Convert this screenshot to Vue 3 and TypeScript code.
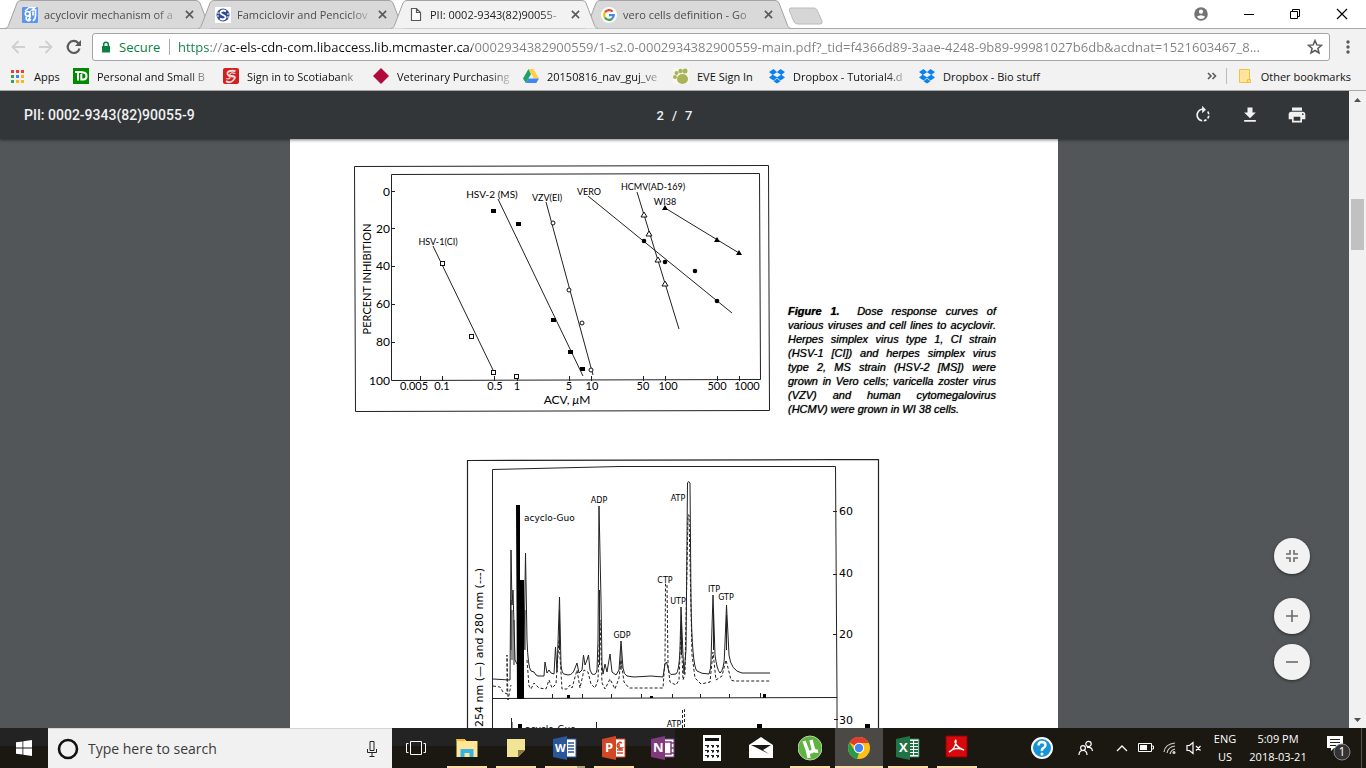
<script setup lang="ts">
interface Tab { id: string; title: string; active?: boolean }
interface Bookmark { icon: string; label: string; size: string }
interface App { id: string; label: string; open?: boolean; current?: boolean }
interface Label { x: number; y: number; t: string; big?: boolean }

const tabs: Tab[] = [
  { id: 'scholar', title: 'acyclovir mechanism of a' },
  { id: 'springer', title: 'Famciclovir and Penciclov' },
  { id: 'file', title: 'PII: 0002-9343(82)90055-', active: true },
  { id: 'google', title: 'vero cells definition - Go' },
]

const url = 'https://ac-els-cdn-com.libaccess.lib.mcmaster.ca/0002934382900559/1-s2.0-0002934382900559-main.pdf?_tid=f4366d89-3aae-4248-9b89-99981027b6db&acdnat=1521603467_8...'

const bookmarks: Bookmark[] = [
  { icon: 'apps', label: 'Apps', size: 'short' },
  { icon: 'td', label: 'Personal and Small B', size: 'long' },
  { icon: 'scotia', label: 'Sign in to Scotiabank', size: 'long' },
  { icon: 'diamond', label: 'Veterinary Purchasing', size: 'long' },
  { icon: 'drive', label: '20150816_nav_guj_ve', size: 'long' },
  { icon: 'paw', label: 'EVE Sign In', size: 'mid' },
  { icon: 'dropbox', label: 'Dropbox - Tutorial4.d', size: 'long' },
  { icon: 'dropbox', label: 'Dropbox - Bio stuff', size: 'plain' },
]

const caption: string[] = [
  'Dose response curves of',
  'various viruses and cell lines to acyclovir.',
  'Herpes simplex virus type 1, CI strain',
  '(HSV-1 [CI]) and herpes simplex virus',
  'type 2, MS strain (HSV-2 [MS]) were',
  'grown in Vero cells; varicella zoster virus',
  '(VZV) and human cytomegalovirus',
  '(HCMV) were grown in WI 38 cells.',
]

const doseY: Label[] = [
  { x: 390, y: 196, t: '0' }, { x: 390, y: 233, t: '20' }, { x: 390, y: 270, t: '40' },
  { x: 390, y: 308, t: '60' }, { x: 390, y: 346, t: '80' }, { x: 390, y: 385, t: '100' },
]
const doseX: Label[] = [
  { x: 414, y: 390, t: '0.005' }, { x: 442, y: 390, t: '0.1' }, { x: 495, y: 390, t: '0.5' },
  { x: 517, y: 390, t: '1' }, { x: 569, y: 390, t: '5' }, { x: 592, y: 390, t: '10' },
  { x: 643, y: 390, t: '50' }, { x: 668, y: 390, t: '100' }, { x: 717, y: 390, t: '500' },
  { x: 747, y: 390, t: '1000' },
]
const doseNames: Label[] = [
  { x: 438, y: 245, t: 'HSV-1(CI)' }, { x: 492, y: 198, t: 'HSV-2 (MS)', big: true },
  { x: 547, y: 201, t: 'VZV(EI)' }, { x: 589, y: 195, t: 'VERO' },
  { x: 653, y: 190, t: 'HCMV(AD-169)' }, { x: 665, y: 205, t: 'WI38' },
]
const doseTicks = [420, 442, 494, 517, 569, 591, 643, 665, 717, 739]
const openSquares = [[443, 264], [472, 337], [494, 373], [517, 377]]
const solidSquares = [[493, 211], [518, 224], [553, 320], [570, 352], [582, 369]]
const openCircles = [[553, 223], [569, 290], [582, 323], [591, 370]]
const solidCircles = [[644, 241], [665, 262], [695, 271], [717, 301]]
const openTriangles = [[644, 215], [649, 234], [658, 260], [665, 284]]
const solidTriangles = [[665, 208], [717, 240], [739, 253]]

const peaks: Label[] = [
  { x: 599, y: 503, t: 'ADP' }, { x: 678, y: 501, t: 'ATP' }, { x: 665, y: 583, t: 'CTP' },
  { x: 678, y: 604, t: 'UTP' }, { x: 714, y: 592, t: 'ITP' }, { x: 726, y: 600, t: 'GTP' },
  { x: 622, y: 638, t: 'GDP' }, { x: 674, y: 727, t: 'ATP' },
]
const scale: Label[] = [
  { x: 839, y: 515, t: '60' }, { x: 839, y: 577, t: '40' }, { x: 839, y: 638, t: '20' }, { x: 839, y: 724, t: '30' },
]

const apps: App[] = [
  { id: 'explorer', label: 'File Explorer', open: true },
  { id: 'sticky', label: 'Sticky Notes', open: true },
  { id: 'word', label: 'Word', open: true },
  { id: 'ppt', label: 'PowerPoint', open: true },
  { id: 'onenote', label: 'OneNote' },
  { id: 'calc', label: 'Calculator' },
  { id: 'mail', label: 'Mail' },
  { id: 'torrent', label: 'Torrent', open: true },
  { id: 'chrome', label: 'Chrome', open: true, current: true },
  { id: 'excel', label: 'Excel', open: true },
  { id: 'acrobat', label: 'Acrobat Reader', open: true },
]
</script>

<template>
  <div class="desktop">
    <header class="browser">
      <div class="tabstrip">
        <div v-for="tab in tabs" :key="tab.id" class="tab" :class="{ active: tab.active }">
          <svg class="tab-shape" viewBox="0 0 207 29" preserveAspectRatio="none">
            <path d="M0 28.5C3 28 3 26 4 24L12 3Q13 .5 16 .5H191Q194 .5 195 3L203 24C204 26 204 28 207 28.5" />
          </svg>
          <svg v-if="tab.id === 'scholar'" class="fav" viewBox="0 0 16 16">
            <rect width="16" height="16" rx="1" fill="#5b93f5" />
            <path d="M5.500 4.500a2.300 2.300 0 1 0 .1 4.600a2.300 2.300 0 0 0-.1-4.600M8 4v6q0 2-2 2.500M4.500 10c-2 3.500 4 5 4 2M11 4.500v4M13.500 3.500v5.500q0 3-2.500 5" fill="none" stroke="#fff" stroke-width="1.700" />
            <path d="M3 4L7 .5h6L10 3h4.500" fill="none" stroke="#fff" stroke-width="1.400" />
          </svg>
          <svg v-else-if="tab.id === 'springer'" class="fav" viewBox="0 0 16 16">
            <rect width="16" height="16" fill="#fff" />
            <circle cx="8" cy="8" r="6.500" fill="#2f4a9a" />
            <path d="M11 4.500Q8 2.500 6 4.500T8 8T10 11.500T5 11.500" fill="none" stroke="#fff" stroke-width="1.800" />
            <path d="M2 6h2M2 9h2M12 7h2M12 10h2" stroke="#fff" />
          </svg>
          <svg v-else-if="tab.id === 'file'" class="fav" viewBox="0 0 16 16">
            <path d="M3.500 1.500h5l4 4v8h-9zM8.500 1.500v4h4" fill="#fff" stroke="#5a5a5a" stroke-width="1.200" />
          </svg>
          <svg v-else class="fav" viewBox="0 0 16 16">
            <circle cx="8" cy="8" r="8" fill="#fff" />
            <g fill="none" stroke-width="2.200">
              <path d="M11.600 4.600A4.800 4.800 0 0 0 3.900 5.500" stroke="#ea4335" />
              <path d="M3.900 5.500A4.800 4.800 0 0 0 3.900 10.500" stroke="#fbbc05" />
              <path d="M3.900 10.500A4.800 4.800 0 0 0 11.200 11.600" stroke="#34a853" />
              <path d="M11.200 11.600A4.800 4.800 0 0 0 12.800 8.100H8" stroke="#4285f4" />
            </g>
          </svg>
          <span class="tab-title">{{ tab.title }}</span>
          <button class="tab-close" :aria-label="'Close ' + tab.title">
            <svg viewBox="0 0 10 10"><path d="M1 1l8 8M9 1l-8 8" stroke="#5a5a5a" stroke-width="1.800" /></svg>
          </button>
        </div>
        <button class="new-tab" aria-label="New tab">
          <svg viewBox="0 0 36 18"><path d="M3 1h23q2 0 3 2l5 11q1 3-2 3H10q-3 0-4-2L1.500 4Q.5 1 3 1z" fill="#d6d6d6" stroke="#bcbcbc" /></svg>
        </button>
        <div class="window-controls">
          <button class="profile" aria-label="Profile"><svg width="14" height="14" viewBox="0 0 14 14"><circle cx="7" cy="7" r="6.800" fill="#737373" /><circle cx="7" cy="4.700" r="2.100" fill="#fff" /><path d="M2.800 9.800q4.200-3 8.400 0q-1.500 2.200-4.200 2.200t-4.200-2.200" fill="#fff" /></svg></button>
          <button aria-label="Minimize"><svg width="12" height="12" viewBox="0 0 12 12"><path d="M1 6.500h10" stroke="#000" /></svg></button>
          <button aria-label="Restore"><svg width="12" height="12" viewBox="0 0 12 12"><path d="M1.500 3.500h7v7h-7zM3.500 3.500v-2h7v7h-2" fill="none" stroke="#000" /></svg></button>
          <button aria-label="Close"><svg width="12" height="12" viewBox="0 0 12 12"><path d="M1 1l10 10M11 1L1 11" stroke="#000" stroke-width="1.200" /></svg></button>
        </div>
      </div>

      <div class="toolbar">
        <button class="nav" aria-label="Back"><svg viewBox="0 0 16 16"><path d="M15 8H2.500M8.500 2l-6 6l6 6" stroke="#d0d0d0" stroke-width="1.800" fill="none" /></svg></button>
        <button class="nav" aria-label="Forward"><svg viewBox="0 0 16 16"><path d="M1 8h12.500M7.500 2l6 6l-6 6" stroke="#d0d0d0" stroke-width="1.800" fill="none" /></svg></button>
        <button class="nav" aria-label="Reload"><svg viewBox="0 0 16 16"><path d="M13.500 9.500A6 6 0 1 1 12.200 4L14 6" stroke="#5a5a5a" stroke-width="2.200" fill="none" /><path d="M15 1v6H9z" fill="#5a5a5a" /></svg></button>
        <div class="omnibox">
          <svg class="lock" viewBox="0 0 10 12"><path d="M1 5h8v6.500H1z" fill="#0b8043" /><path d="M2.700 5V3.500a2.300 2.300 0 0 1 4.600 0V5" fill="none" stroke="#0b8043" stroke-width="1.500" /></svg>
          <label class="secure" for="address">Secure</label>
          <input id="address" class="address" type="text" :value="url" />
          <button class="star" aria-label="Bookmark this page"><svg viewBox="0 0 16 16"><path d="M8 1.500l1.800 4.400l4.700.4l-3.600 3.100l1.100 4.600L8 11.500L4 14l1.100-4.600L1.500 6.300l4.700-.4z" fill="none" stroke="#5a5a5a" stroke-width="1.500" /></svg></button>
        </div>
        <button class="menu" aria-label="Menu"><svg viewBox="0 0 4 14"><circle cx="2" cy="2" r="1.700" /><circle cx="2" cy="7" r="1.700" /><circle cx="2" cy="12" r="1.700" /></svg></button>
      </div>

      <nav class="bookmarks">
        <a v-for="b in bookmarks" :key="b.label" href="#" class="bookmark" :class="b.size">
          <svg viewBox="0 0 16 16">
            <template v-if="b.icon === 'apps'">
              <path d="M1 2h3v3H1zM6 2h3v3H6zM11 2h3v3h-3z" fill="#f13d34" />
              <path d="M1 7h3v3H1z" fill="#32a350" /><path d="M6 7h3v3H6z" fill="#2e8af5" /><path d="M11 7h3v3h-3zM6 12h3v3H6zM11 12h3v3h-3z" fill="#fbb51b" /><path d="M1 12h3v3H1z" fill="#32a350" />
            </template>
            <template v-else-if="b.icon === 'td'">
              <rect width="16" height="16" fill="#008a00" /><path d="M2 4h7.500M5 4v8.500M8.300 6v5.500h2q3.200 0 3.200-3.500t-3.200-3.500H8" fill="none" stroke="#fff" stroke-width="2" />
            </template>
            <template v-else-if="b.icon === 'scotia'">
              <rect width="16" height="16" rx="2" fill="#d41f1f" /><path d="M12.500 3Q5 2 4.500 5T9 8T10.500 12T3 13" fill="none" stroke="#f6dcdc" stroke-width="1.800" /><path d="M12.500 5.500Q7 4 7 6.500T11 9M3 10.500q4 1 4-1T5 8" fill="none" stroke="#f6dcdc" stroke-width="1.200" />
            </template>
            <path v-else-if="b.icon === 'diamond'" d="M8 0l8 8l-8 8l-8-8z" fill="#b10b3c" />
            <template v-else-if="b.icon === 'drive'">
              <path d="M5.500 1L0 10.500L2.800 15L8 6z" fill="#1da362" /><path d="M5.500 1h5L16 10.500h-5.200z" fill="#ffcf48" /><path d="M5.300 10.500H16L13.300 15H2.800z" fill="#4285f4" />
            </template>
            <template v-else-if="b.icon === 'paw'">
              <rect width="16" height="16" fill="#f8f8ef" /><ellipse cx="9.500" cy="11" rx="5.500" ry="5" fill="#a8b35a" /><circle cx="2" cy="9" r="2" fill="#a8b35a" /><circle cx="3.500" cy="5" r="2" fill="#a8b35a" /><circle cx="7.500" cy="3" r="2.200" fill="#a8b35a" /><circle cx="12" cy="3" r="2.500" fill="#a8b35a" />
            </template>
            <path v-else d="M4.500 1L0 4l3.500 2.800L0 9.500l4.500 3L8 9.700l3.500 2.800L16 9.500l-3.500-2.700L16 4l-4.500-3L8 3.900zM8 4.200l4 2.600L8 9.300L4 6.800zM8 10.500l-3.500 2.800L8 15.500l3.500-2.200z" fill="#0a83ee" fill-rule="evenodd" />
          </svg>
          <span>{{ b.label }}</span>
        </a>
        <button class="overflow" aria-label="More bookmarks"><svg viewBox="0 0 10 8"><path d="M1 1l3 3l-3 3M5.500 1l3 3l-3 3" fill="none" stroke="#5a5a5a" stroke-width="1.600" /></svg></button>
        <a href="#" class="bookmark other">
          <svg viewBox="0 0 16 16"><path d="M2.500 1.500h10v10h1v3h-11z" fill="#ffe599" stroke="#eec24b" /><path d="M10.500 14.500v-3h3v3z" fill="#ffe07d" stroke="#eec24b" /></svg>
          <span>Other bookmarks</span>
        </a>
      </nav>
    </header>

    <main class="viewer">
      <div class="document">
        <div class="pdf-bar">
          <h1>PII: 0002-9343(82)90055-9</h1>
          <p class="pages"><span>2</span><span>/</span><span>7</span></p>
          <div class="pdf-actions">
            <button aria-label="Rotate clockwise"><svg viewBox="0 0 24 24" fill="#f1f1f1"><path d="M15.550 5.550L11 1v3.070C7.060 4.560 4 7.920 4 12s3.050 7.440 7 7.930v-2.020c-2.840-.48-5-2.940-5-5.910s2.160-5.430 5-5.910V10zM19.930 11a7.900 7.900 0 0 0-1.620-3.890l-1.420 1.420c.54.75.88 1.600 1.020 2.470zM13 17.900v2.020a7.920 7.920 0 0 0 3.900-1.610l-1.440-1.440c-.75.54-1.590.89-2.460 1.030zm3.890-2.420l1.420 1.410A7.900 7.900 0 0 0 19.930 13h-2.020a5.900 5.900 0 0 1-1.020 2.480z" /></svg></button>
            <button aria-label="Download"><svg viewBox="0 0 24 24" fill="#f1f1f1"><path d="M19 9h-4V3H9v6H5l7 7zM5 18v2h14v-2z" /></svg></button>
            <button aria-label="Print"><svg viewBox="0 0 24 24" fill="#f1f1f1"><path d="M19 8H5c-1.660 0-3 1.340-3 3v6h4v4h12v-4h4v-6c0-1.660-1.340-3-3-3zm-3 11H8v-5h8zm3-7a1 1 0 1 1 0-2a1 1 0 0 1 0 2zm-1-9H6v4h12z" /></svg></button>
          </div>
        </div>

        <article class="paper">
          <figure class="dose">
            <svg width="416" height="247" viewBox="354 165 416 247" class="plot">
              <g fill="none" stroke="#222">
                <path d="M354.500 166.500L768.500 165.500L769.500 410.500L355.500 411.500z" />
                <path d="M391.500 174.500L759.500 173.500L760.500 379.500L391.500 380.500z" />
                <path v-for="x in doseTicks" :key="x" :d="`M${x}.5 376v5`" />
                <path d="M391 191.500h4M391 228.500h4M391 266.500h4M391 304.500h4M391 342.500h4" />
                <path d="M433 246L494 372M498 199L583 376M546 202L593 375M588 196L732 313M637 192L679 329M665 208L739 253" />
              </g>
              <rect v-for="p in openSquares" :key="p[0]" :x="p[0] - 2.500" :y="p[1] - 2.500" width="4" height="4" fill="#fff" stroke="#111" />
              <rect v-for="p in solidSquares" :key="p[0]" :x="p[0] - 2" :y="p[1] - 2" width="5" height="4" />
              <circle v-for="p in openCircles" :key="p[0]" :cx="p[0]" :cy="p[1]" r="2" fill="#fff" stroke="#111" />
              <circle v-for="p in solidCircles" :key="p[0]" :cx="p[0]" :cy="p[1]" r="2.300" />
              <path v-for="p in openTriangles" :key="p[0]" :d="`M${p[0]} ${p[1] - 3}l3 5h-6z`" fill="#fff" stroke="#111" />
              <path v-for="p in solidTriangles" :key="p[0]" :d="`M${p[0]} ${p[1] - 3}l3 5h-6z`" />
              <text v-for="l in doseY" :key="l.t" :x="l.x" :y="l.y" text-anchor="end" class="num">{{ l.t }}</text>
              <text v-for="l in doseX" :key="l.t" :x="l.x" :y="l.y" text-anchor="middle" class="num small">{{ l.t }}</text>
              <text v-for="l in doseNames" :key="l.t" :x="l.x" :y="l.y" text-anchor="middle" class="name" :class="{ big: l.big }">{{ l.t }}</text>
              <text x="567" y="404" text-anchor="middle" class="num">ACV, <tspan font-style="italic">μ</tspan>M</text>
              <text transform="translate(371 279) rotate(-90)" text-anchor="middle" class="num small">PERCENT INHIBITION</text>
            </svg>
            <figcaption>
              <span v-for="(line, i) in caption" :key="i" class="line" :class="{ last: i === caption.length - 1 }"><template v-if="i === 0"><b>Figure 1.</b>&nbsp; </template>{{ line }}</span>
            </figcaption>
          </figure>

          <figure class="trace">
            <svg width="414" height="300" viewBox="466 459 414 300" class="plot">
              <g fill="none" stroke="#222">
                <path d="M467.500 759V460.500L878.500 459.500V759" stroke-width="1.200" />
                <path d="M492.500 759V469.500L620 466.500H835.500L837 698V759M492 698.500L837 697.500" />
                <path d="M833 511.500h4M833 574.500h4M833 634.500h4M834 719.500h4" />
                <path d="M552.500 694v4M582.500 694v4M611.500 694v4M641.500 694v4M672.500 694v4M700.500 694v4M729.500 694v4M760.500 693v5M511.500 718v12M596.500 722v8" />
                <path d="M493 679L510 680L511 550L512 605L513 590L515 660L517 664M524 650L525.500 553L527 640Q528 668 531 671L534 672Q536 676 538 676H544L545 662L547 673L549 670L551 673L554 674L555.500 647L557 672L559.500 597L561 665Q562 674 564 674L568 675Q573 675 575 668L577 663L579 673L582 670L583.500 655L585 665L587 660L588.500 655L590 670L592 674Q596 676 597 670L598 640L599 506L601 600L602 665L603 674L605 664L607 672L610 654L612 672L616 675L619 670L621 641L623 668Q624 675 627 676L634 677L651 676L663 677L665 664L666.500 662L668 668Q669 674 671 674.500L676 674Q679 672 680 650L681 607L683 655L684 674L686 650L687.500 483Q688.500 480 690 483L691 600Q692 667 697 671Q701 674 709 674Q711 670 711 660L713 595L715 655Q717 670 720 673Q724 670 724.500 655L726.500 605L729 655Q731 671 742 673H770" />
                <path d="M511 600v50M512 610v50M514 620v45M599.500 590v75M621 650v20M681.500 615v40M559.500 610v40M713.500 610v40M726.500 615v35M525 610v40M512 722v8" />
                <path d="M493 686L500 687L503 692L507 694V655L508 700L511 685M527 660L529 686L531 689L534 683L539 688L546 689L549 680L552 688L556 684L559 640L562 689H567L570 685L572 688L577 670L580 688L584 670L588 672L591 684L595 688L598 680L600 620L602 683L605 689L610 679L615 689L619 678L621 660L624 682L629 688L663 688L665 660L665.500 584L667 584L668 665L670 682L676 685L679 680L681 630L683 680L685 674L688 515L689 515L692 655L695 678L701 684L710 682L713 652L716 680L722 676L726 660L731 680L734 681H771M682.500 728V709.500h2V728" stroke-dasharray="3 2" />
              </g>
              <path d="M516 505h4v75h4v119h-7zM518 724h4v5h-4zM757 724h5v5h-5zM865 724h5v5h-5zM567 695h3v3h-3zM650 696h3v2h-3zM763 694h3v4h-3z" />
              <text v-for="(l, i) in peaks" :key="i" :x="l.x" :y="l.y" text-anchor="middle" class="peak">{{ l.t }}</text>
              <text v-for="l in scale" :key="l.t" :x="l.x" :y="l.y" class="scale">{{ l.t }}</text>
              <text x="524" y="521" class="guo">acyclo-Guo</text>
              <text x="525" y="732" class="guo">acyclo-Guo</text>
              <text transform="translate(483 727) rotate(-90)" class="axis">254 nm (—) and 280 nm (---)</text>
            </svg>
          </figure>
        </article>

        <div class="zoom">
          <button class="fit" aria-label="Fit to page"><svg viewBox="0 0 12 12"><path d="M0 4h4V0M12 4H8V0M0 8h4v4M12 8H8v4" fill="none" stroke="#6b6b6b" stroke-width="1.600" /></svg></button>
          <button aria-label="Zoom in"><svg viewBox="0 0 12 12"><path d="M0 6h12M6 0v12" stroke="#6b6b6b" stroke-width="1.600" /></svg></button>
          <button aria-label="Zoom out"><svg viewBox="0 0 12 12"><path d="M0 6h12" stroke="#6b6b6b" stroke-width="1.600" /></svg></button>
        </div>
      </div>

      <div class="scrollbar">
        <button aria-label="Scroll up"><svg viewBox="0 0 7 4"><path d="M0 4L3.500 0L7 4z" fill="#505050" /></svg></button>
        <div class="track"><div class="thumb"></div></div>
        <button aria-label="Scroll down"><svg viewBox="0 0 7 4"><path d="M0 0h7L3.500 4z" fill="#505050" /></svg></button>
      </div>
    </main>

    <footer class="taskbar">
      <button class="start" aria-label="Start"><svg viewBox="0 0 16 16"><path d="M0 2.300L6.500 1.400V7.600H0zM7.300 1.300L16 0V7.600H7.300zM0 8.400H6.500V14.600L0 13.700zM7.300 8.400H16V16L7.300 14.700z" fill="#fff" /></svg></button>
      <div class="search">
        <svg class="cortana" viewBox="0 0 22 22"><circle cx="11" cy="11" r="9" fill="none" stroke="#111" stroke-width="2.600" /></svg>
        <input type="text" aria-label="Search" placeholder="Type here to search" />
        <button aria-label="Speak"><svg width="12" height="18" viewBox="0 0 12 18"><path d="M4 1.500h4v9H4zM1.500 9v3.500h9V9M6 12.500v4M3.500 16.500h5" fill="none" stroke="#222" /></svg></button>
      </div>
      <button class="app task-view" aria-label="Task view"><svg width="20" height="16" viewBox="0 0 20 16"><path d="M4.500 1.500h11v13h-11zM2.500 3.500h-2v9h2M17.500 3.500h2v9h-2" fill="none" stroke="#fff" /></svg></button>
      <button v-for="a in apps" :key="a.id" class="app" :class="[a.id, { open: a.open, current: a.current }]" :aria-label="a.label">
        <svg width="24" height="26" viewBox="0 0 24 26">
          <template v-if="a.id === 'explorer'">
            <path d="M1.500 4h8l2 2h11v16h-21z" fill="#ffe596" /><path d="M1.500 4h8l1 2h-9z" fill="#f6bd2b" /><path d="M5.500 22v-8h13v8h-4v-4h-5v4z" fill="#35b2e6" />
          </template>
          <template v-else-if="a.id === 'sticky'"><path d="M3 4h18v11l-7 7H3z" fill="#f1e497" /><path d="M14 22v-7h7z" fill="#877c3e" /></template>
          <template v-else-if="a.id === 'word'">
            <path d="M12 4h11v18H12z" fill="#fff" stroke="#2b579a" /><path d="M15 8h6M15 11h6M15 14h6M15 17h6" stroke="#2b579a" stroke-width="1.500" /><path d="M0 4l14-3v24L0 22z" fill="#2b579a" /><text x="2" y="17" class="office narrow">W</text>
          </template>
          <template v-else-if="a.id === 'ppt'">
            <path d="M12 4h11v18H12z" fill="#fff" stroke="#d24726" /><path d="M20 8a3 3 0 1 0 0 5h-3V9M15 15h6M15 18h6" fill="none" stroke="#d24726" stroke-width="1.500" /><path d="M0 4l14-3v24L0 22z" fill="#d24726" /><text x="3" y="17" class="office">P</text>
          </template>
          <template v-else-if="a.id === 'onenote'">
            <path d="M12 4h11v18H12z" fill="#fff" stroke="#80397b" /><path d="M14 7h6v12h-6M20 8h3M20 13h3M20 18h3" fill="none" stroke="#80397b" stroke-width="1.500" /><path d="M0 4l14-3v24L0 22z" fill="#80397b" /><text x="2" y="17" class="office">N</text>
          </template>
          <template v-else-if="a.id === 'calc'">
            <path d="M3 0h18v26H3z" fill="#fff" /><path d="M5 3h14v3H5z" fill="#111" /><path d="M5 10h4v2l-2 1v-2H5zM11 10h3v2l-2 1v-2h-1zM16 10h3v2l-2 1v-2h-1zM5 15h4v2l-2 1v-2H5zM11 15h3v2l-2 1v-2h-1zM16 15h3v2l-2 1v-2h-1zM5 20h4v2l-2 1v-2H5zM11 20h3v2l-2 1v-2h-1zM16 20h3v2l-2 1v-2h-1z" fill="#222" />
          </template>
          <template v-else-if="a.id === 'mail'"><path d="M0 10L12 2l12 8v13H0z" fill="#fff" /><path d="M2 10h20l-8 5l6 4z" fill="#1c1914" /></template>
          <template v-else-if="a.id === 'torrent'">
            <circle cx="12" cy="13" r="12" fill="#60b340" stroke="#b2d8a0" /><path d="M6 6l3 8q1 4 4 3t2-4l-2-8M15 13q1 4 5 3M9 14l2 9" fill="none" stroke="#fff" stroke-width="3.400" />
          </template>
          <template v-else-if="a.id === 'chrome'">
            <circle cx="12" cy="13" r="11" fill="#fbc116" /><path d="M12 13L2.500 7.500A11 11 0 0 1 21.800 8H12z" fill="#e33b2e" /><path d="M12 13l-2 10.800A11 11 0 0 1 2.500 7.500L7.500 15.500z" fill="#279b4b" /><path d="M7.500 15.500l4.500 2.500l-2 5.800A11 11 0 0 1 5 21.500z" fill="#279b4b" /><circle cx="12" cy="13" r="5.200" fill="#fff" /><circle cx="12" cy="13" r="4.200" fill="#4285f4" />
          </template>
          <template v-else-if="a.id === 'excel'">
            <path d="M12 4h11v18H12z" fill="#fff" stroke="#217346" /><path d="M14 7h3M18 7h4M14 10h3M18 10h4M14 13h3M18 13h4M14 16h3M18 16h4M14 19h3M18 19h4" stroke="#217346" stroke-width="1.800" /><path d="M0 4l14-3v24L0 22z" fill="#217346" /><text x="3" y="17" class="office">X</text>
          </template>
          <template v-else>
            <path d="M1 1h21v21H1z" fill="#d8090d" stroke="#8e0000" /><path d="M4 17q6-3 7-10q0-4-1 0q2 6 9 8q-7-3-12 0q-3 2-3 2" fill="none" stroke="#fff" stroke-width="1.400" />
          </template>
        </svg>
      </button>
      <div class="tray">
        <button class="help" aria-label="Help"><svg width="24" height="24" viewBox="0 0 24 24"><circle cx="12" cy="12" r="10" fill="#1793d8" stroke="#fff" stroke-width="2" /><path d="M8.500 9.500Q8.500 6 12 6t3.500 3q0 2-2 3t-1.500 3" fill="none" stroke="#fff" stroke-width="2.400" /><circle cx="12" cy="18" r="1.500" fill="#fff" /></svg></button>
        <button class="people" aria-label="People"><svg width="16" height="16" viewBox="0 0 16 16" fill="none" stroke="#fff" stroke-width="1.200"><circle cx="10.500" cy="4" r="2.700" /><path d="M9 7.500q5-1 5.500 3.500" /><circle cx="5" cy="8" r="2.400" /><path d="M1 15q0-4.500 4-4.500T9 15" /></svg></button>
        <button class="chev" aria-label="Show hidden icons"><svg width="12" height="8" viewBox="0 0 12 8"><path d="M1 7l5-5l5 5" fill="none" stroke="#fff" stroke-width="1.300" /></svg></button>
        <button aria-label="Battery"><svg width="16" height="10" viewBox="0 0 16 10"><path d="M.5 .5h13v8H.5zM14 3h1.500v3H14" fill="none" stroke="#fff" /><path d="M2 2h7v5H2z" fill="#fff" /></svg></button>
        <button aria-label="Network"><svg width="14" height="14" viewBox="0 0 14 14" fill="none" stroke="#ccc" stroke-width="1.200"><path d="M1 11Q2 3 12 2M4 12Q5 6 12 5M7 13Q8 9 12 8" /><circle cx="11" cy="11.500" r="1" fill="#fff" /></svg></button>
        <button class="mute" aria-label="Volume"><svg width="16" height="14" viewBox="0 0 16 14" fill="none" stroke="#fff" stroke-width="1.200"><path d="M1 4.500h2.500L7 1.500v11L3.500 9.500H1zM10 5l4.500 4.500M14.500 5L10 9.500" /></svg></button>
        <p class="lang">ENG<br />US</p>
        <p class="clock">5:09 PM<br />2018-03-21</p>
        <button class="notes" aria-label="1 notification">
          <svg width="26" height="26" viewBox="0 0 26 26"><path d="M1 1h16v12H8l-3 3v-3H1z" fill="#fff" /><path d="M4 4.500h10M4 7.500h10M4 10.500h6" stroke="#222" /><circle cx="16" cy="17" r="8" fill="#333" stroke="#888" /><text x="16" y="21" text-anchor="middle" class="count">1</text></svg>
        </button>
      </div>
    </footer>
  </div>
</template>

<style>
body { margin: 0; overflow: hidden; }
</style>

<style scoped>
.desktop { height: 100vh; display: flex; flex-direction: column; font-family: "Open Sans", "Noto Sans", sans-serif; font-size: 11px; color: #111; }
* { box-sizing: border-box; }
button { border: 0; padding: 0; background: none; display: flex; align-items: center; justify-content: center; flex: none; font: inherit; }
p, h1, figure { margin: 0; }
svg { display: block; flex: none; }
.browser { background: #f2f2f2; border-bottom: 1px solid #a9a9a9; height: 91px; flex: none; }
.tabstrip { height: 29px; background: #fff; display: flex; padding-left: 5px; box-shadow: inset 0 -1px #a8a8a8; }
.tab { position: relative; width: 207px; height: 29px; margin-right: -14px; display: flex; align-items: center; padding-left: 17px; color: #4c4c4c; }
.tab.active { z-index: 1; color: #222; }
.tab-shape { position: absolute; inset: 0; width: 100%; height: 100%; }
.tab-shape path { fill: #d9d9d9; stroke: #a3a3a3; }
.active .tab-shape path { fill: #f2f2f2; }
.fav { position: relative; width: 16px; height: 16px; }
.tab-title { position: relative; margin-left: 6px; width: 138px; white-space: nowrap; line-height: 20px; font-size: 11px; mask-image: linear-gradient(90deg, #000 112px, transparent 138px); }
.tab-close { position: relative; margin-left: 2px; width: 10px; height: 10px; }
.tab-close svg { width: 9px; height: 9px; }
.new-tab { width: 36px; margin: 7px 0 4px 11px; height: 18px; }
.new-tab svg { width: 36px; }
.window-controls { margin-left: auto; display: flex; height: 27px; }
.window-controls button { width: 46px; }
.window-controls .profile { margin-right: 2px; }
.window-controls button:last-child { width: 48px; }
.toolbar { height: 36px; display: flex; align-items: center; padding: 0 12px 0 4px; }
.nav { width: 28px; height: 28px; }
.nav svg { width: 16px; height: 16px; }
.omnibox { flex: 1; min-width: 0; height: 28px; margin-left: 4px; background: #fff; border: 1px solid #a5a5a5; border-radius: 3px; display: flex; align-items: center; padding: 0 6px 0 8px; font-size: 13px; }
.lock { width: 10px; height: 12px; }
.secure { color: #0b8043; margin-left: 8px; width: 51px; border-right: 1px solid #aaa; line-height: 16px; flex: none; }
.address { flex: 1; min-width: 0; border: 0; outline: 0; padding: 0 0 0 8px; font: inherit; line-height: 24px; color: transparent; background: linear-gradient(90deg, #0b8043 39px, #808080 39px, #808080 55px, #111 55px, #111 302px, #808080 302px); background-clip: text; }
.star { width: 16px; height: 16px; }
.star svg { width: 16px; }
.menu { width: 12px; }
.omnibox + .menu { margin-left: 12px; }
.menu svg { width: 4px; height: 14px; fill: #5a5a5a; }
.bookmarks { height: 22px; display: flex; align-items: center; padding: 0 15px 0 10px; }
.bookmark { display: flex; gap: 8px; align-items: center; color: #111; text-decoration: none; white-space: nowrap; flex: none; margin-right: 13px; }
.bookmark svg { width: 16px; height: 16px; }
.short { width: 50px; }
.mid { width: 83px; }
.long { width: 137px; }
.long span { width: 113px; mask-image: linear-gradient(90deg, #000 92px, transparent 118px); }
.overflow { margin-left: auto; width: 10px; }
.overflow svg { width: 10px; height: 8px; }
.other { margin: 0 0 0 9px; border-left: 1px solid #bbb; padding-left: 10px; }
.viewer { flex: 1; min-height: 0; display: flex; }
.document { flex: 1; min-width: 0; position: relative; background: #525659; overflow: hidden; display: flex; flex-direction: column; }
.pdf-bar { height: 48px; flex: none; background: #323639; box-shadow: 0 1px 3px rgba(0, 0, 0, .5); z-index: 1; display: grid; grid-template-columns: 1fr auto 1fr; align-items: center; color: #f1f1f1; font: 500 14px Roboto, sans-serif; padding: 0 24px; }
h1 { font: inherit; }
.pages { display: flex; gap: 8px; font-size: 13px; }
.pdf-actions { justify-self: end; display: flex; gap: 23px; margin-right: 16px; }
.pdf-actions button { width: 24px; height: 24px; }
.pdf-actions svg { width: 20px; height: 20px; }
.paper { width: 768px; max-width: 100%; align-self: center; margin-right: 1px; flex: 1 0 auto; background: #fff; padding: 26px 62px 0 64px; }
.dose { display: flex; align-items: flex-start; }
.plot { font-family: Lato, sans-serif; }
.num { font-size: 12px; }
.num.small { font-size: 11px; }
.name { font-size: 9px; }
.name.big { font-size: 10px; }
.peak { font: 8px "DejaVu Sans", sans-serif; }
.guo { font: 9px "DejaVu Sans", sans-serif; }
.scale, .axis { font: 11px "DejaVu Sans", sans-serif; }
figcaption { width: 208px; margin: 139px 0 0 18px; font: italic 11px/14px "Liberation Sans", Arial, sans-serif; text-shadow: 0 0 1px #444; color: #000; }
.line { display: block; text-align: justify; text-align-last: justify; white-space: nowrap; }
.line.last { text-align-last: left; }
.trace { margin: 43px 0 0 112px; }
.trace svg { margin-bottom: -60px; }
.zoom { position: absolute; right: 39px; bottom: 48px; display: flex; flex-direction: column; gap: 10px; }
.zoom button { width: 36px; height: 36px; border-radius: 50%; background: #f2f2f2; box-shadow: 0 1px 3px rgba(0, 0, 0, .5); }
.zoom .fit { margin-bottom: 14px; }
.zoom svg { width: 12px; height: 12px; }
.scrollbar { width: 17px; background: #f1f1f1; display: flex; flex-direction: column; }
.scrollbar button { height: 17px; }
.scrollbar svg { width: 7px; height: 4px; }
.track { flex: 1; padding: 91px 2px 0 2px; }
.thumb { height: 51px; background: #c1c1c1; }
.taskbar { height: 40px; flex: none; display: flex; background: linear-gradient(#232323, #232323) 0 0 / 675px 18px no-repeat, #1b1812; color: #fff; }
.start { width: 48px; }
.start svg { width: 16px; height: 16px; }
.search { width: 344px; background: #f1f1f1; display: flex; align-items: center; padding: 0 14px 0 9px; border-top: 1px solid #d5d5d5; }
.cortana { width: 22px; height: 22px; }
.search input { flex: 1; min-width: 0; border: 0; outline: 0; background: none; margin-left: 9px; padding: 0; font: 14px "Open Sans", sans-serif; }
.search input::placeholder { color: #3b3b3b; opacity: 1; }
.app { width: 48px; margin-right: 1px; position: relative; }
.task-view { margin-right: 3px; }
.app.open::after { content: ""; position: absolute; left: 4px; right: 4px; bottom: 0; height: 2px; background: #fddda9; }
.app.current { background: #4b4946; }
.app.current::after { left: 0; right: 0; }
.app.word::after { background: linear-gradient(90deg, #fddda9 32px, #b7a280 32px); }
.office { fill: #fff; font: 700 13px "Open Sans", sans-serif; }
.office.narrow { font-size: 11px; }
.tray { margin-left: auto; display: flex; align-items: center; padding-right: 4px; border-right: 1px solid #555; margin-right: 4px; }
.tray button { width: 24px; height: 40px; }
.tray .help { margin-right: 20px; }
.tray .people { margin-right: 12px; }
.lang, .clock { text-align: center; line-height: 18px; }
.lang { width: 38px; }
.clock { width: 68px; }
.tray .notes { width: 36px; margin-left: 9px; }
.count { fill: #fff; font: 12px "Open Sans", sans-serif; }
</style>
